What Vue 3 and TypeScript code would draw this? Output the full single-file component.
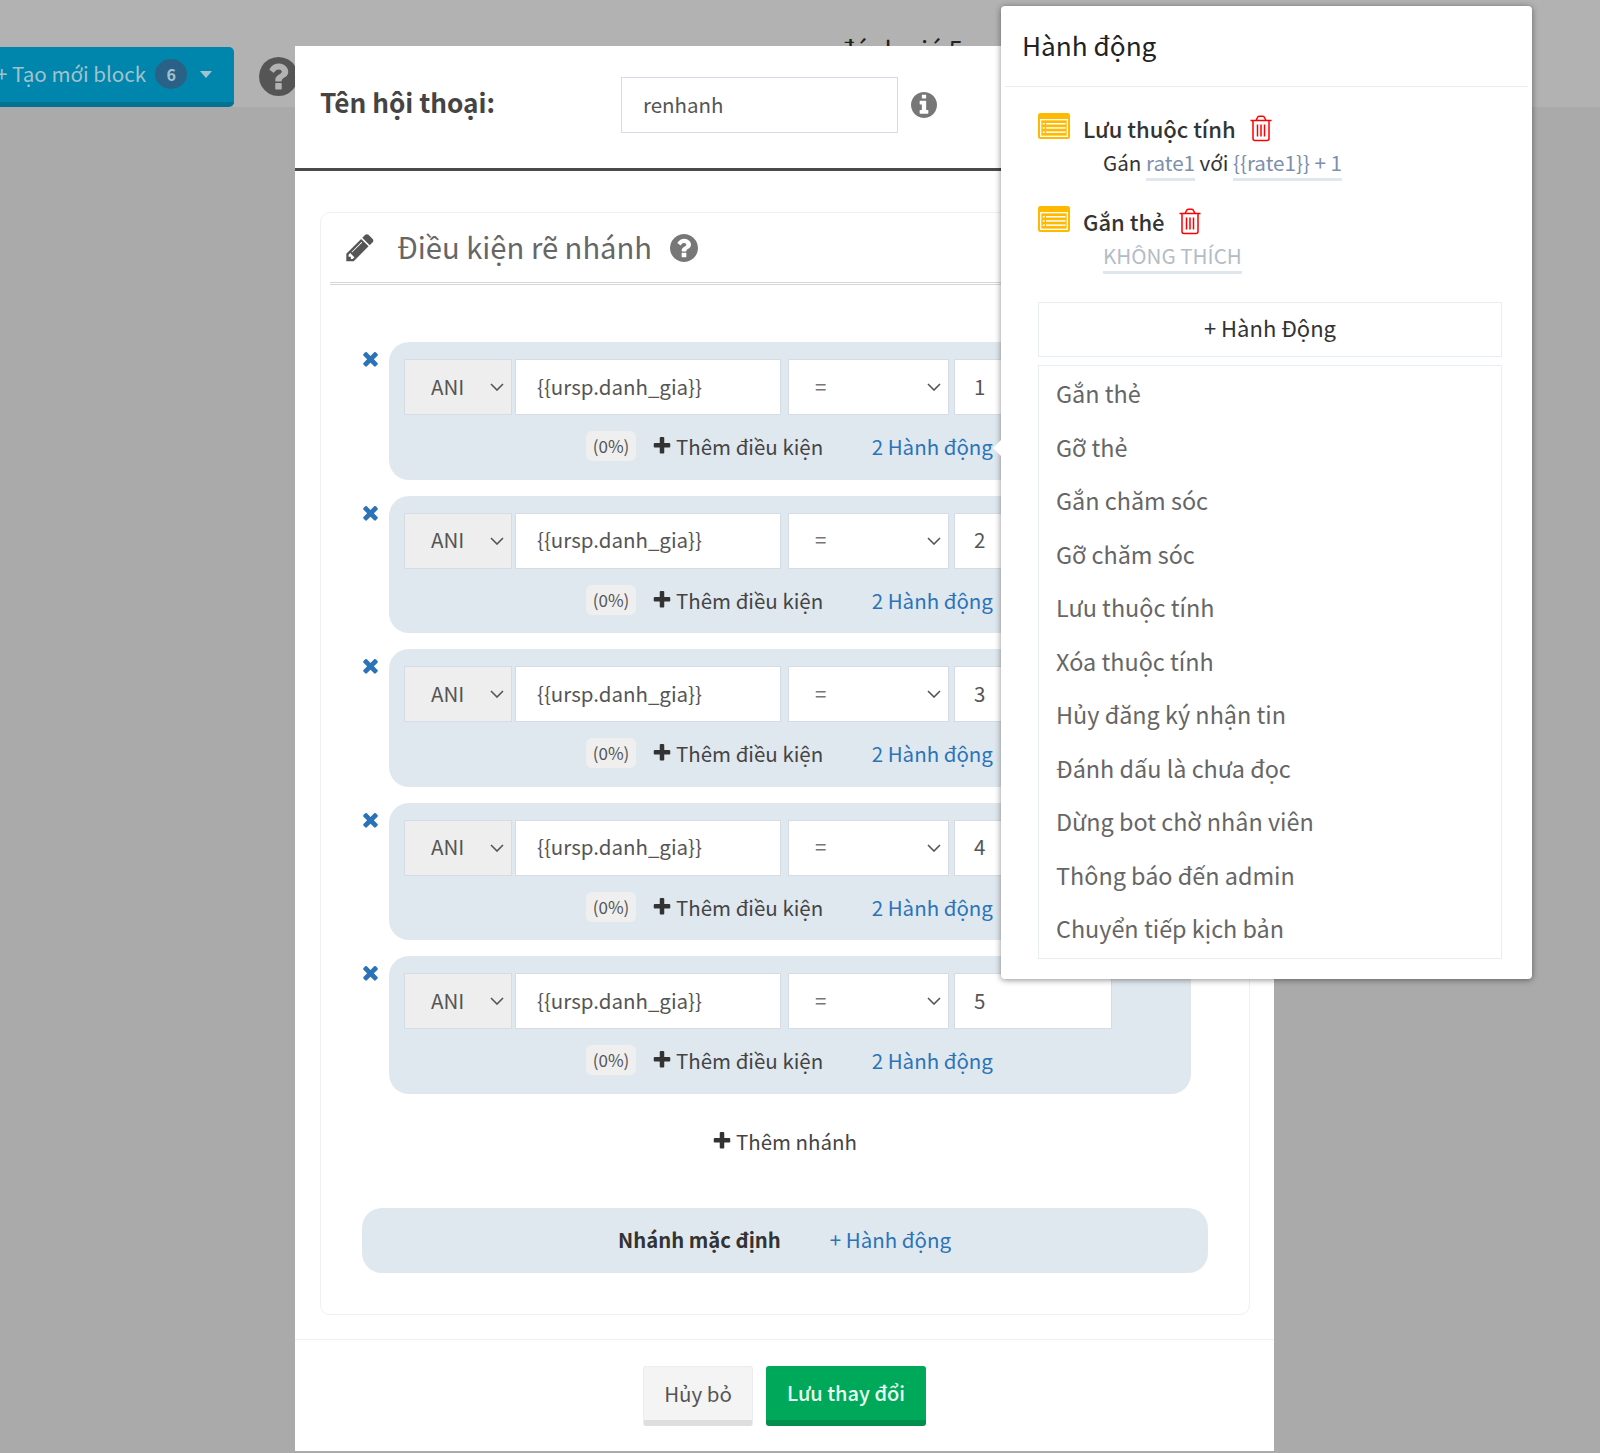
<script setup lang="ts">
const fa = {
  plus: 'M1600 736v192q0 40-28 68t-68 28h-416v416q0 40-28 68t-68 28h-192q-40 0-68-28t-28-68v-416h-416q-40 0-68-28t-28-68v-192q0-40 28-68t68-28h416v-416q0-40 28-68t68-28h192q40 0 68 28t28 68v416h416q40 0 68 28t28 68z',
  times: 'M1490 1322q0 40-28 68l-136 136q-28 28-68 28t-68-28l-294-294-294 294q-28 28-68 28t-68-28l-136-136q-28-28-28-68t28-68l294-294-294-294q-28-28-28-68t28-68l136-136q28-28 68-28t68 28l294 294 294-294q28-28 68-28t68 28l136 136q28 28 28 68t-28 68l-294 294 294 294q28 28 28 68z',
  question: 'M1024 1376v-192q0-14-9-23t-23-9h-192q-14 0-23 9t-9 23v192q0 14 9 23t23 9h192q14 0 23-9t9-23zm256-672q0-88-55.5-163t-138.5-116-170-41q-243 0-371 213-15 24 8 42l132 100q7 6 19 6 16 0 25-12 53-68 86-92 34-24 86-24 48 0 85.5 26t37.5 59q0 38-20 61t-68 45q-63 28-115.5 86.5t-52.5 125.5v36q0 14 9 23t23 9h192q14 0 23-9t9-23q0-19 21.5-49.5t54.5-49.5q32-18 49-28.5t46-35 44.5-48 28-60.5 12.5-81zm384 192q0 209-103 385.5t-279.5 279.5-385.5 103-385.5-103-279.5-279.5-103-385.5 103-385.5 279.5-279.5 385.5-103 385.5 103 279.5 279.5 103 385.5z',
  info: 'M1152 1376v-160q0-14-9-23t-23-9h-96v-512q0-14-9-23t-23-9h-320q-14 0-23 9t-9 23v160q0 14 9 23t23 9h96v320h-96q-14 0-23 9t-9 23v160q0 14 9 23t23 9h448q14 0 23-9t9-23zm-128-896v-160q0-14-9-23t-23-9h-192q-14 0-23 9t-9 23v160q0 14 9 23t23 9h192q14 0 23-9t9-23zm640 416q0 209-103 385.5t-279.5 279.5-385.5 103-385.5-103-279.5-279.5-103-385.5 103-385.5 279.5-279.5 385.5-103 385.5 103 279.5 279.5 103 385.5z',
  pencil: 'M491 1536l91-91-235-235-91 91v107h128v128h107zm523-928q0-22-22-22-10 0-17 7l-542 542q-7 7-7 17 0 22 22 22 10 0 17-7l542-542q7-7 7-17zm-54-192l416 416-832 832h-416v-416zm683 96q0 53-37 90l-166 166-416-416 166-165q36-38 90-38 53 0 91 38l235 234q37 39 37 91z',
}
const trash = 'M1 5.500h21M3.500 5.500v18a2 2 0 0 0 2 2h12a2 2 0 0 0 2-2v-18M6.500 5.500L8 2.500A2 2 0 0 1 9.800 1.200h3.400A2 2 0 0 1 15 2.500l1.500 3M8 9.500v12M11.500 9.500v12M15 9.500v12'
const branches = ['1', '2', '3', '4', '5']
const actions = [
  { title: 'Lưu thuộc tính', tag: false },
  { title: 'Gắn thẻ', tag: true },
]
const menu = ['Gắn thẻ', 'Gỡ thẻ', 'Gắn chăm sóc', 'Gỡ chăm sóc', 'Lưu thuộc tính', 'Xóa thuộc tính', 'Hủy đăng ký nhận tin', 'Đánh dấu là chưa đọc', 'Dừng bot chờ nhân viên', 'Thông báo đến admin', 'Chuyển tiếp kịch bản']
</script>

<template>
  <div class="page">
    <header class="topbar">
      <button class="create-btn">
        <span>+ Tạo mới block</span>
        <span class="count">6</span>
        <span class="caret"></span>
      </button>
      <svg class="help-top" viewBox="128 128 1536 1536"><path :d="fa.question" /></svg>
      <span class="behind">đánh giá 5</span>
    </header>

    <section class="modal">
      <div class="modal-head">
        <h2 class="name-label">Tên hội thoại:</h2>
        <div class="field name-field">renhanh</div>
        <svg class="info" viewBox="128 128 1536 1536"><path :d="fa.info" /></svg>
      </div>
      <div class="modal-body">
        <div class="box">
          <div class="box-head">
            <svg class="pencil" viewBox="0 128 1792 1536"><path :d="fa.pencil" /></svg>
            <span class="box-title">Điều kiện rẽ nhánh</span>
            <svg class="help" viewBox="128 128 1536 1536"><path :d="fa.question" /></svg>
          </div>
          <div class="branches">
            <div v-for="b in branches" :key="b" class="branch">
              <svg class="remove" viewBox="128 128 1536 1536"><path :d="fa.times" /></svg>
              <div class="panel">
                <div class="cond">
                  <div class="field sel sel-type">ANI
                    <svg class="chev" viewBox="0 0 14 8"><path d="M1 1l6 6 6-6" /></svg>
                  </div>
                  <div class="field attr">&#123;&#123;ursp.danh_gia&#125;&#125;</div>
                  <div class="field sel sel-op">=
                    <svg class="chev" viewBox="0 0 14 8"><path d="M1 1l6 6 6-6" /></svg>
                  </div>
                  <div class="field val">{{ b }}</div>
                </div>
                <div class="panel-foot">
                  <span class="pct">(0%)</span>
                  <span class="add"><svg class="plus" viewBox="128 128 1536 1536"><path :d="fa.plus" /></svg>Thêm điều kiện</span>
                  <a class="link">2 Hành động</a>
                </div>
              </div>
            </div>
          </div>
          <div class="add-branch"><svg class="plus" viewBox="128 128 1536 1536"><path :d="fa.plus" /></svg>Thêm nhánh</div>
          <div class="default-panel">
            <strong>Nhánh mặc định</strong>
            <a class="link">+ Hành động</a>
          </div>
        </div>
      </div>
      <div class="modal-foot">
        <button class="btn cancel">Hủy bỏ</button>
        <button class="btn save">Lưu thay đổi</button>
      </div>
    </section>

    <aside class="popover">
      <span class="arrow"></span>
      <h3 class="pop-title">Hành động</h3>
      <div class="pop-body">
        <div v-for="a in actions" :key="a.title" class="action">
          <svg class="list-ic" viewBox="0 0 32 26">
            <rect width="32" height="26" rx="2.500" fill="#ffb900" />
            <rect x="2.700" y="6.700" width="26.600" height="16.600" fill="none" stroke="#fff" stroke-width="1.300" />
            <g fill="#fff">
              <rect x="4.700" y="10" width="2" height="1.500" />
              <rect x="4.700" y="14.200" width="2" height="1.500" />
              <rect x="4.700" y="18.400" width="2" height="1.500" />
              <rect x="8" y="10" width="19.500" height="1.500" />
              <rect x="8" y="14.200" width="19.500" height="1.500" />
              <rect x="8" y="18.400" width="19.500" height="1.500" />
            </g>
          </svg>
          <div class="action-main">
            <div class="action-title">{{ a.title }}
              <svg class="trash" viewBox="0 0 23 27"><path :d="trash" /></svg>
            </div>
            <div v-if="a.tag" class="action-desc"><span class="tok muted">KHÔNG THÍCH</span></div>
            <div v-else class="action-desc">Gán <span class="tok">rate1</span> với <span class="tok">&#123;&#123;rate1&#125;&#125; + 1</span></div>
          </div>
        </div>
        <div class="add-action">+ Hành Động</div>
        <ul class="menu">
          <li v-for="m in menu" :key="m">{{ m }}</li>
        </ul>
      </div>
    </aside>
  </div>
</template>

<style>
html, body { margin: 0; background: #aaaaaa; }
</style>

<style scoped>
.page {
  position: relative;
  width: 1600px;
  height: 1453px;
  overflow: hidden;
  background: #aaaaaa;
  font-family: "Noto Sans CJK SC", "Noto Sans", sans-serif;
  color: #444;
}
.topbar {
  height: 107px;
  box-sizing: border-box;
  padding-top: 47px;
  background: #b2b2b2;
  display: flex;
  align-items: flex-start;
}
.create-btn {
  width: 238px;
  height: 60px;
  margin-left: -4px;
  box-sizing: border-box;
  border: 0;
  border-bottom: 5px solid #007394;
  border-radius: 5px;
  background: #0086ac;
  color: #a3c2cd;
  font: inherit;
  font-size: 20.600px;
  display: flex;
  align-items: center;
  padding: 0 0 3px 0;
}
.count {
  width: 32px;
  height: 30px;
  line-height: 30px;
  margin: 1px 0 0 9px;
  border-radius: 50%;
  background: #2a6287;
  font-size: 16px;
  font-weight: 700;
}
.caret {
  margin: 3px 0 0 13px;
  border: 6.500px solid transparent;
  border-top: 7px solid #a3c2cd;
  border-bottom: 0;
}
.help-top { width: 39px; height: 39px; margin: 10px 0 0 25px; fill: #555; flex: none; }
.behind { position: absolute; left: 838px; top: 30px; font-size: 26px; color: #222; }

.modal {
  position: absolute;
  left: 295px;
  top: 46px;
  width: 979px;
  height: 1405px;
  background: #fff;
}
.modal-head {
  height: 122px;
  border-bottom: 3px solid #4a4a4a;
  display: flex;
  align-items: flex-start;
  padding-left: 25px;
}
.name-label { margin: 37px 0 0; width: 301px; font-size: 26.200px; line-height: 38px; font-weight: 700; color: #444; }
.field {
  box-sizing: border-box;
  background: #fff;
  border: 1px solid #d5dce6;
  display: flex;
  align-items: center;
  padding-bottom: 3px;
  font-size: 20.500px;
  color: #555;
}
.name-field { width: 277px; height: 56px; margin-top: 31px; padding-left: 21px; }
.info { width: 26px; height: 26px; margin: 46px 0 0 13px; fill: #777; }
.modal-body { padding: 41px 25px 0; }
.box {
  box-sizing: border-box;
  width: 930px;
  height: 1103px;
  border: 1px solid #eef0f3;
  border-radius: 10px;
  padding: 0 9px;
}
.box-head {
  height: 69px;
  border-bottom: 3px double #d6d6d6;
  display: flex;
  align-items: center;
  padding-left: 14px;
}
.pencil { width: 32px; height: 29px; fill: #555; }
.box-title { margin-left: 21px; font-size: 29.200px; color: #666; padding-bottom: 4px; }
.help { width: 28px; height: 28px; margin-left: 18px; fill: #777; }
.branches { padding: 57px 0 0 0; display: flex; flex-direction: column; gap: 16px; }
.branch { position: relative; padding-left: 59px; }
.remove { position: absolute; left: 31px; top: 7px; width: 19px; height: 19px; fill: #2b73b8; }
.panel {
  width: 802px;
  height: 137.500px;
  box-sizing: border-box;
  background: #e0e8ef;
  border-radius: 20px;
  padding: 17px 0 0 15px;
}
.cond { display: flex; height: 56px; }
.sel { position: relative; }
.sel-type { width: 108px; padding-left: 26px; background: #eeeeee; }
.attr { width: 266px; margin-left: 3px; padding-left: 21px; }
.sel-op { width: 161px; margin-left: 7px; padding-left: 26px; color: #777; }
.val { width: 158px; margin-left: 5px; padding-left: 19px; }
.chev { position: absolute; right: 7px; top: 23px; width: 14px; height: 8px; fill: none; stroke: #555; stroke-width: 1.600; }
.panel-foot { display: flex; align-items: center; height: 30px; margin: 16px 0 0 182px; font-size: 20.500px; }
.pct { width: 50px; height: 30px; line-height: 30px; text-align: center; background: #efefef; border-radius: 6px; font-size: 17px; color: #555; }
.add { margin-left: 17px; display: flex; align-items: center; color: #444; }
.plus { width: 18px; height: 18px; margin-right: 5px; fill: #333; }
.link { color: #2b73b8; font-size: 20.500px; }
.panel-foot .link { margin-left: 48.500px; }
.add-branch { display: flex; justify-content: center; align-items: center; height: 30px; margin-top: 32px; font-size: 20.500px; color: #444; }
.default-panel {
  width: 846px;
  height: 65px;
  margin: 52px 0 0 32px;
  background: #e0e8ef;
  border-radius: 20px;
  display: flex;
  align-items: center;
  padding: 0 0 3px 256px;
  box-sizing: border-box;
  font-size: 20.300px;
  color: #333;
}
.default-panel .link { margin-left: 49px; }
.modal-foot {
  margin-top: 24px;
  border-top: 1px solid #f1f1f1;
  padding-top: 26px;
  display: flex;
  justify-content: center;
  gap: 13px;
}
.btn {
  height: 60px;
  box-sizing: border-box;
  border: 0;
  border-radius: 3px;
  font: inherit;
  font-size: 20.500px;
  padding-bottom: 3px;
}
.cancel { width: 110px; background: #f4f4f4; border: 1px solid #ececec; border-bottom: 6px solid #dedede; color: #555; }
.save { width: 160px; background: #00a85a; border-bottom: 6px solid #008f4c; color: #e8fff2; font-weight: 500; font-size: 20px; }

.popover {
  position: absolute;
  left: 1001px;
  top: 6px;
  width: 531px;
  height: 973px;
  box-sizing: border-box;
  background: #fff;
  border-radius: 4px;
  box-shadow: 0 1px 6px rgba(0, 0, 0, 0.450);
}
.arrow {
  position: absolute;
  left: -8px;
  top: 434px;
  border: 8px solid transparent;
  border-right-color: #fff;
  border-left: 0;
}
.pop-title {
  margin: 0 4px;
  height: 80px;
  line-height: 78px;
  padding-left: 17px;
  font-size: 26.200px;
  font-weight: 400;
  color: #222;
  border-bottom: 1px solid #e8ecf3;
}
.pop-body { padding: 26px 30px 0 37px; }
.action { display: flex; height: 93px; }
.list-ic { width: 32px; height: 26px; flex: none; }
.action-main { margin-left: 13px; }
.action-title { display: flex; align-items: center; height: 30px; font-size: 22px; font-weight: 500; color: #333; gap: 13px; }
.trash { width: 24px; height: 27px; fill: none; stroke: #f00; stroke-width: 1.500; }
.action-desc { margin: 5px 0 0 20px; font-size: 20.600px; line-height: 28px; color: #333; }
.tok { color: #7c8fad; border-bottom: 3px solid #dfe6ee; padding-bottom: 1px; }
.muted { color: #b4bcc6; }
.add-action {
  margin-top: 3px;
  height: 55px;
  line-height: 48px;
  box-sizing: border-box;
  border: 1px solid #e8ecf3;
  text-align: center;
  font-size: 22px;
  color: #333;
}
.menu {
  list-style: none;
  margin: 8px 0 0;
  padding: 1px 0 0;
  height: 594px;
  box-sizing: border-box;
  border: 1px solid #e8ecf3;
}
.menu li { height: 53.500px; line-height: 52px; padding-left: 17px; font-size: 23.400px; color: #666; }
</style>
